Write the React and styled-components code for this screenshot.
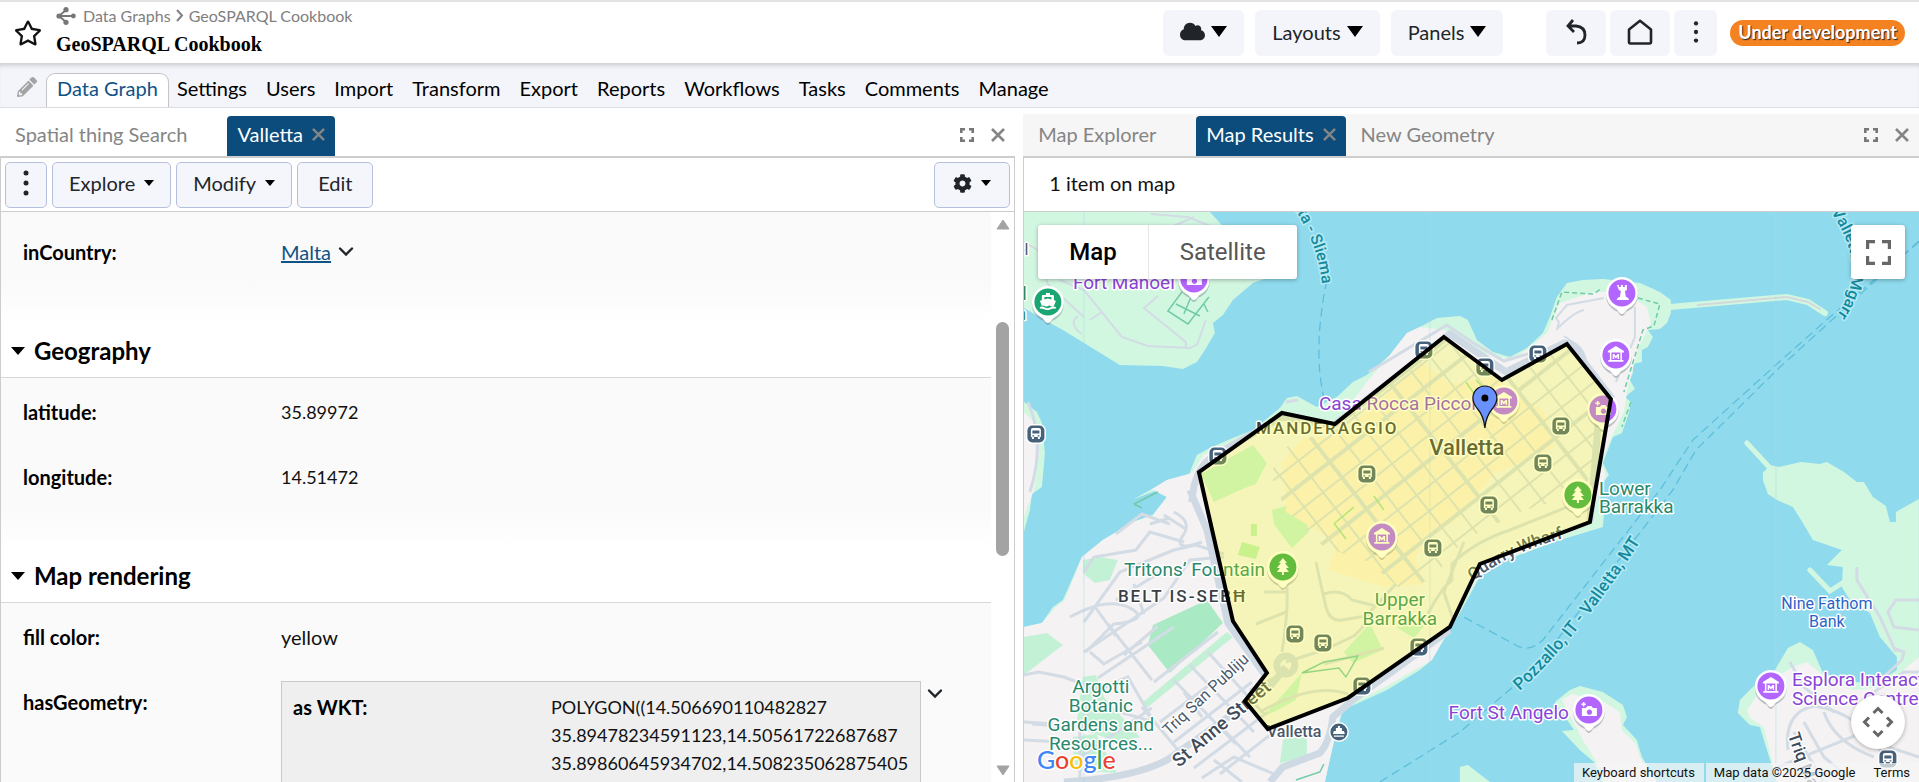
import React from 'react';
import styled, { createGlobalStyle } from 'styled-components';
import { FaCloud, FaCog, FaPencilAlt, FaRegStar } from 'react-icons/fa';

const GlobalStyles = createGlobalStyle`
  * {
    box-sizing: border-box;
  }
  body {
    margin: 0;
    background: #fff;
    color: #111;
    font-family: Lato, 'Open Sans', sans-serif;
    font-size: 20px;
  }
  button {
    font: inherit;
    color: inherit;
    cursor: pointer;
  }
  a {
    text-decoration: none;
  }
`;

const Page = styled.div`
  display: flex;
  flex-direction: column;
  height: 100vh;
  min-height: 480px;
  overflow: hidden;
`;

/* ---------- header ---------- */

const Header = styled.header`
  display: flex;
  align-items: center;
  flex: none;
  height: 64px;
  padding: 0 14px;
  border-top: 2px solid #e3e3e3;
  border-bottom: 1px solid #d5d5d8;
`;

const StarButton = styled.button`
  display: flex;
  padding: 0;
  border: 0;
  background: none;
  color: #111;
`;

const TitleBlock = styled.div`
  display: flex;
  flex-direction: column;
  flex: 1;
  gap: 4px;
  padding: 0 0 6px 14px;
`;

const Breadcrumb = styled.nav`
  display: flex;
  align-items: center;
  gap: 5px;
  font-size: 16px;
  line-height: 24px;
  a {
    color: #808080;
  }
  a:first-of-type {
    margin-left: 2px;
  }
`;

const Title = styled.h1`
  margin: 0;
  font-family: 'Liberation Serif', serif;
  font-size: 20px;
  line-height: 24px;
  color: #000;
`;

const HeaderGroup = styled.div`
  display: flex;
  gap: ${(props) => props.$gap};
  margin-right: ${(props) => props.$after};
`;

const HeaderButton = styled.button`
  display: flex;
  align-items: center;
  justify-content: center;
  gap: 6px;
  height: 46px;
  min-width: ${(props) => props.$min || '0'};
  padding: 0 ${(props) => props.$pad || '0'} 2px;
  border: 0;
  border-radius: 6px;
  background: #f4f5fa;
  color: #212529;
`;

const StatusBadge = styled.span`
  padding: 0 8px 2px;
  border-radius: 13px;
  background: #f58220;
  color: #fff;
  font-size: 18px;
  font-weight: 700;
  line-height: 24px;
  text-shadow: 1px 1px 1px #222;
`;

/* ---------- section navigation ---------- */

const NavBar = styled.nav`
  display: flex;
  align-items: flex-end;
  flex: none;
  height: 44px;
  padding-left: 17px;
  border-bottom: 1px solid #dbdbe2;
  background: #f4f5fa;
  box-shadow: inset 0 4px 5px -3px rgba(0, 0, 0, 0.2);
`;

const PencilIcon = styled(FaPencilAlt)`
  margin: 0 9px 10px 0;
  color: #a3a3a3;
`;

const NavLink = styled.a`
  margin-right: -3px;
  padding: 0 10px 4px;
  border: 1px solid ${(props) => (props.$active ? '#c3c3c8' : 'transparent')};
  border-bottom: 0;
  border-radius: 9px 9px 0 0;
  background: ${(props) => (props.$active ? '#fff' : 'transparent')};
  color: ${(props) => (props.$active ? '#0f5286' : '#000')};
  line-height: 29px;
`;

/* ---------- panels ---------- */

const Workspace = styled.main`
  display: grid;
  grid-template-columns: minmax(0, 17fr) minmax(0, 15fr);
  column-gap: 8px;
  flex: 1;
  min-height: 0;
  padding-top: 6px;
`;

const Panel = styled.section`
  display: flex;
  flex-direction: column;
  min-height: 0;
`;

const TabStrip = styled.div`
  display: flex;
  align-items: flex-end;
  flex: none;
  height: 44px;
  padding-right: 10px;
  border-bottom: 2px solid #cdcdcd;
  background: ${(props) => (props.$muted ? '#f6f6f6' : '#fff')};
`;

const Tab = styled.button`
  display: flex;
  align-items: center;
  gap: 9px;
  height: 40px;
  margin-left: ${(props) => (props.$active ? '25px' : '0')};
  padding: 0 ${(props) => (props.$active ? '10px' : '15px')} 4px;
  border: 0;
  border-radius: 4px 4px 0 0;
  background: ${(props) => (props.$active ? '#0b4c7c' : 'transparent')};
  color: ${(props) => (props.$active ? '#fff' : '#858585')};
`;

const PanelTools = styled.div`
  display: flex;
  align-items: center;
  gap: 17px;
  height: 40px;
  margin-left: auto;
  padding-bottom: 3px;
`;

const ToolButton = styled.button`
  display: flex;
  padding: 0;
  border: 0;
  background: none;
  color: #777;
`;

const PanelBody = styled.div`
  display: flex;
  flex-direction: column;
  flex: 1;
  min-height: 0;
  border-left: 1px solid #cdcdcd;
  border-right: ${(props) => (props.$rightEdge ? '1px solid #cdcdcd' : '0')};
`;

const Toolbar = styled.div`
  display: flex;
  align-items: center;
  gap: 5px;
  flex: none;
  height: 54px;
  padding: 0 4px;
  border-bottom: 1px solid #cdcdcd;
`;

const ToolbarButton = styled.button`
  display: flex;
  align-items: center;
  justify-content: center;
  gap: 9px;
  height: 46px;
  min-width: 42px;
  padding: 0 ${(props) => props.$pad || '0'} 3px;
  border: 1px solid #b5c0dc;
  border-radius: 5px;
  background: #f4f6fb;
  color: #212529;
  &:last-child {
    margin-left: ${(props) => (props.$end ? 'auto' : '0')};
  }
`;

const MapSummary = styled.p`
  flex: none;
  height: 54px;
  margin: 0;
  padding: 0 25px;
  border-bottom: 1px solid #cdcdcd;
  line-height: 50px;
`;

/* ---------- resource form ---------- */

const FormViewport = styled.div`
  display: flex;
  flex: 1;
  min-height: 0;
`;

const FormContent = styled.div`
  flex: 1;
  min-width: 0;
  overflow: hidden;
`;

const SectionHeading = styled.h2`
  display: flex;
  align-items: center;
  gap: 9px;
  height: 58px;
  margin: 0;
  padding: 4px 9px 0 10px;
  border-bottom: 1px solid #d8d8d8;
  font-size: 24px;
  font-weight: 700;
  color: #000;
`;

const SectionBody = styled.dl`
  margin: 0;
  padding: ${(props) => (props.$first ? '8px' : '2px')} 22px 35px;
  background: linear-gradient(to top, #fff, #fafafa 35px);
`;

const PropertyRow = styled.div`
  display: flex;
  min-height: 65px;
  padding-top: 16px;
  line-height: 32px;
  dt {
    flex: none;
    width: 258px;
    font-weight: 700;
    color: #000;
  }
  dd {
    display: flex;
    align-items: center;
    gap: 7px;
    height: 32px;
    margin: 0;
    font-size: ${(props) => (props.$numeric ? '18px' : 'inherit')};
  }
  dd a {
    color: #0f5286;
    text-decoration: underline;
  }
`;

const GeometryCell = styled.div`
  display: flex;
  align-items: flex-start;
  gap: 6px;
  flex: 1;
  min-width: 0;
  margin-right: 26px;
  margin-top: -5px;
  svg {
    margin-top: 7px;
  }
`;

const GeometryBox = styled.dl`
  display: flex;
  flex: 1;
  min-width: 0;
  height: 200px;
  margin: 0;
  padding: 11px 0 0 11px;
  border: 1px solid #c8c8c8;
  background: #efefef;
  line-height: 28px;
  dd {
    display: block;
    height: auto;
    white-space: pre-line;
  }
`;

const ScrollTrack = styled.div`
  display: flex;
  flex-direction: column;
  align-items: center;
  flex: none;
  width: 23px;
  padding: 7px 0 6px;
`;

const ScrollThumb = styled.div`
  width: 13px;
  height: 42%;
  margin: 92px 0 auto;
  border-radius: 7px;
  background: #a3a3a3;
`;

/* ---------- map ---------- */

const MapCanvas = styled.div`
  position: relative;
  flex: 1;
  min-height: 0;
  overflow: hidden;
  background: #90daee;
  font-family: Roboto, sans-serif;
  > svg {
    display: block;
    width: 100%;
    height: 100%;
  }
`;

const MapTypeControl = styled.div`
  position: absolute;
  top: 13px;
  left: 14px;
  display: flex;
  border-radius: 3px;
  background: #fff;
  box-shadow: 0 1px 4px rgba(0, 0, 0, 0.3);
`;

const MapTypeButton = styled.button`
  height: 54px;
  padding: 0 31px;
  border: 0;
  background: none;
  color: ${(props) => (props.$active ? '#000' : '#565656')};
  font-size: 24px;
  font-weight: ${(props) => (props.$active ? 500 : 400)};
  & + & {
    border-left: 1px solid #e6e6e6;
  }
`;

const MapRoundButton = styled.button`
  position: absolute;
  right: 14px;
  ${(props) => (props.$top ? 'top: 13px;' : 'bottom: 33px;')}
  display: flex;
  align-items: center;
  justify-content: center;
  width: 54px;
  height: 54px;
  padding: 0;
  border: 0;
  border-radius: ${(props) => (props.$top ? '3px' : '50%')};
  background: #fff;
  color: #666;
  box-shadow: 0 1px 4px rgba(0, 0, 0, 0.3);
`;

const Attribution = styled.div`
  position: absolute;
  right: 0;
  bottom: 0;
  display: flex;
  gap: 2px;
  font-size: 13px;
  line-height: 19px;
  white-space: nowrap;
`;

const AttributionItem = styled.div`
  display: flex;
  gap: 18px;
  padding: 0 9px 0 8px;
  background: rgba(245, 245, 245, 0.72);
  color: #111;
  a,
  button {
    padding: 0;
    border: 0;
    background: none;
    color: inherit;
  }
`;

/* ---------- icons ---------- */

const Dots = ({ size = 28 }) => (
  <svg width="6" height={size} viewBox="0 0 6 28" fill="#212529">
    <circle cx="3" cy="4" r="2.5" />
    <circle cx="3" cy="14" r="2.5" />
    <circle cx="3" cy="24" r="2.5" />
  </svg>
);

const Triangle = ({ w = 16, h = 11 }) => (
  <svg width={w} height={h} viewBox="0 0 16 11" preserveAspectRatio="none">
    <path d="M0 0h16l-8 11z" fill="#000" />
  </svg>
);

const Chevron = () => (
  <svg width="16" height="12" viewBox="0 0 16 12">
    <path d="M2 2.5l6 6 6-6" fill="none" stroke="#212529" strokeWidth="2.4" strokeLinecap="round" />
  </svg>
);

const Cross = ({ size = 14 }) => (
  <svg width={size} height={size} viewBox="0 0 14 14">
    <path d="M1 1l12 12M13 1L1 13" stroke="#858585" strokeWidth="2.6" />
  </svg>
);

const Expand = () => (
  <svg width="14" height="14" viewBox="0 0 14 14">
    <path
      d="M1.3 5V1.3H5M9 1.3h3.7V5M12.7 9v3.7H9M5 12.7H1.3V9"
      fill="none"
      stroke="#777"
      strokeWidth="2.6"
    />
  </svg>
);

const GraphIcon = () => (
  <svg width="20" height="18" viewBox="0 0 20 18" fill="#777">
    <path d="M3 9h14M3 9L10 3M3 9l7 6" stroke="#777" strokeWidth="1.8" fill="none" />
    <circle cx="3" cy="9" r="2.6" />
    <circle cx="10" cy="2.7" r="2.6" />
    <circle cx="10" cy="15.3" r="2.6" />
    <circle cx="17.4" cy="9" r="2.4" />
  </svg>
);

const UndoIcon = () => (
  <svg width="24" height="26" viewBox="0 0 24 26" fill="none" stroke="#212529" strokeWidth="2.8">
    <path d="M9 1L4 7l6 6M4 7h8q9 1 9 9 0 8-8 8" />
  </svg>
);

const HomeIcon = () => (
  <svg width="26" height="26" viewBox="0 0 26 26" fill="none" stroke="#212529" strokeWidth="2.6">
    <path d="M2 10.5L13 1.8l11 8.7V23q0 1.5-1.5 1.5h-19Q2 24.5 2 23z" strokeLinejoin="round" />
  </svg>
);

/* ---------- map drawing ---------- */

const AREA =
  '420,125 478,168 543,132 587,187 566,310 456,352 426,415 324,486 244,517 221,489 243,461 209,409 175,260 258,201 311,212';

const MAINLAND =
  'M0 415L18 411 29 395 39 388 58 345 79 328 96 318 109 310 129 303 143 285 131 279 110 287 128 277 136 274 143 268 165 263 168 255 173 243 186 236 209 226 229 218 256 196 263 186 273 184 293 195 313 185 329 170 343 163 366 143 383 121 396 115 413 106 436 104 444 108 453 128 469 140 486 145 503 136 519 121 526 105 533 85 543 71 559 68 579 67 616 71 636 80 647 88 647 101 643 111 636 117 624 118 629 125 624 135 618 138 618 150 609 152 609 161 606 168 611 177 601 185 607 190 605 201 598 221 589 225 579 251 585 263 579 271 576 288 580 303 579 315 553 323 536 328 476 350 458 361 436 401 424 421 408 448 396 458 363 478 319 498 311 525 304 555 301 570H0z';

const MAINLAND_INNER =
  'M0 415L18 411 31 396 41 388 58 345 79 328 109 310 129 303 143 285 128 277 143 268 168 261 180 243 229 220 260 205 311 212 343 170 366 143 383 121 396 115 420 118 445 130 460 142 486 147 503 138 523 121 536 91 569 80 600 80 623 95 627 111 615 135 604 175 600 200 589 222 577 250 582 263 573 288 566 312 458 357 424 419 408 448 363 474 319 496 311 525 301 570H0z';

const STREETS = [
  'M0 463L15 460 40 465 74 478M60 440L140 386 166 348 200 345M74 478L104 465 130 510 96 500M60 410L96 360 150 338 172 333 200 342',
  'M60 360L70 345 112 338 126 320 160 330M92 322L118 302 146 312M150 300Q170 310 158 325 150 340 178 330M126 312l20-6M140 303l22 14',
  'M46 405Q84 384 106 396T90 412L62 440M72 396L92 424M92 388L146 354M110 372L120 402',
  'M84 412L128 468M66 440L80 452 118 430M100 443L134 414M74 466L150 415',
  'M130 470L194 420M118 495L160 545M150 468L212 532M166 453L230 520M184 440L240 502M136 510L200 462M150 530L228 470M170 556L244 500M196 562L250 520',
  'M178 566L210 545 250 562M190 548L218 570M160 480L178 505M200 518L226 545M128 496L56 545M50 515L8 512M0 510L30 512M0 528L38 530M56 570L56 520 74 478',
  'M262 362Q266 392 258 440M262 380H240M262 400L232 412',
  'M292 350L302 395Q306 410 318 408L342 404M300 382Q318 376 328 388L352 394',
  'M262 450L300 438 330 424Q344 412 346 400L372 372M440 330L428 360 420 380 430 410M404 402Q416 378 428 368V352Q450 330 486 318L566 286',
  'M236 500Q290 470 324 482M226 478L262 460M360 436Q330 444 300 452',
];

const MAJOR_ROADS = [
  'M40 570Q110 566 143 548L243 478 262 455',
  'M166 278L183 318 204 411 241 463M168 290Q170 250 200 238L258 205 309 214 402 142 426 122 482 160 540 131Q556 132 560 150L587 185 574 215 566 310',
  'M246 570L259 555 296 541Q306 530 309 505L329 488 426 418',
];

const EAST_ROADS = [
  'M764 538Q760 500 790 494 830 500 850 530L895 545M754 555L840 520 858 540M800 500Q810 530 850 545M780 510L800 545 830 570M853 471L878 448 880 440 869 436',
  'M833 355V368L856 405 872 440M895 388H872L864 400 870 415 895 418M766 450L780 475 810 500M895 460L880 460 850 480M770 520L800 570',
];

const GRID = Array.from({ length: 26 }, (_, i) => i);

const GLYPHS = {
  rook: 'M-5-8h2v2h2v-2h2v2h2v-2h2v5l-2 1 1 6h1l2 2v1h-12v-1l2-2h1l1-6-2-1z',
  museum:
    'M0-9L8-4v1.500H-8V-4zM-6-2.500h1.500V5h9v-7.500H6V5h1.500v1.800h-15V5H-6zM-3.200 4v-5h1.500L0 1l1.700-2h1.500v5h-1.500V1.500L0 3.400-1.700 1.500V4z',
  camera:
    'M-5-2h2l1.500-2h4L4-2h4v8H-7v-8zM.5-.5a2.700 2.700 0 1 0 .1 0M-7.500-6.500H-6V-8h1.500v1.500H-3V-5h-1.500v1.500H-6V-5h-1.500z',
  tree: 'M0-9l4 5H2l4 5H3l3 4H1v3h-2V5h-5l3-4h-3l4-5h-2z',
  ferry:
    'M-2-9h4v2h3q1 0 1 1v4l2 1-2 5q-2 1-3 0-1.500-1-3 0-1.500 1-3 0-1.500-1-3 0l-2-5 2-1v-4q0-1 1-1h3zM-3.500-5v2.500L0-3.500l3.500 1V-5zM-8 5q3-1 5 .5t5 0 6-.5v1.500q-4 0-6 1t-5 0-5-1z',
};

const Pin = ({ x, y, glyph, color = '#b266ff' }) => (
  <g transform={`translate(${x} ${y})`}>
    <path
      d="M0 22q-2 0-4-4Q-16 13-16 0A16 16 0 0 1 16 0Q16 13 4 18 2 22 0 22z"
      fill="#52606d"
      opacity=".35"
      transform="translate(0 1)"
    />
    <path d="M0 21q-2 0-5-4.500Q-16 11-16 0A16 16 0 0 1 16 0Q16 11 5 16.500 2 21 0 21z" fill="#fff" />
    <circle r="13.500" fill={color} />
    <path d={GLYPHS[glyph]} fill="#fff" fillRule="evenodd" />
  </g>
);

const BusStop = ({ x, y }) => (
  <g transform={`translate(${x} ${y})`}>
    <rect x="-10" y="-10" width="20" height="20" rx="6.500" fill="#fff" />
    <rect x="-8.500" y="-8.500" width="17" height="17" rx="5" fill="#46617a" />
    <path
      d="M-5 3v-7q0-2 2-2h6q2 0 2 2v7h-1v2h-2v-2h-4v2h-2v-2zM-3.500-3.500v3h7v-3zM-3.500 1.200h1.800v1.200h-1.800zM1.700 1.200h1.800v1.200H1.700z"
      fill="#fff"
      fillRule="evenodd"
    />
  </g>
);

const STOPS = [
  [400, 138], [194, 244], [343, 262], [12, 222], [461, 155], [514, 142], [537, 214], [519, 251],
  [465, 293], [409, 336], [271, 422], [299, 431], [395, 435], [338, 474], [864, 547],
];

const PINS = [
  { x: 598, y: 81, glyph: 'rook' },
  { x: 592, y: 143, glyph: 'museum' },
  { x: 480, y: 189, glyph: 'museum' },
  { x: 579, y: 197, glyph: 'camera' },
  { x: 358, y: 325, glyph: 'museum' },
  { x: 565, y: 498, glyph: 'camera' },
  { x: 747, y: 474, glyph: 'museum' },
  { x: 170, y: 67, glyph: 'camera' },
  { x: 554, y: 283, glyph: 'tree', color: '#34a853' },
  { x: 259, y: 355, glyph: 'tree', color: '#34a853' },
  { x: 24, y: 90, glyph: 'ferry', color: '#1aa673' },
];

const MapLabel = styled.text`
  fill: ${(props) => props.$color};
  font-size: ${(props) => props.$size || 19}px;
  font-weight: ${(props) => props.$weight || 400};
  letter-spacing: ${(props) => (props.$tracked ? '2px' : 'normal')};
  text-anchor: ${(props) => props.$anchor || 'start'};
  stroke: ${(props) => props.$halo || '#fff'};
  stroke-width: 3px;
  stroke-linejoin: round;
  paint-order: stroke;
`;

const LogoText = styled.text`
  font-family: Lato, sans-serif;
  font-size: 25px;
  font-weight: 500;
  stroke: #fff;
  stroke-width: 3px;
  paint-order: stroke;
`;

const PURPLE = '#8a43d6';
const GREEN = '#28896a';
const TEAL = '#14899c';
const SLATE = '#4a586b';

function MapDrawing() {
  return (
    <svg viewBox="0 0 895 570" preserveAspectRatio="xMidYMid slice" role="img" aria-label="Map of Valletta">
      <defs>
        <clipPath id="city">
          <path d="M246 262L262 235 310 216 420 127 478 168 543 134 585 187 572 250 558 282 500 298 440 328 410 365 380 380 345 350 300 335 262 298z" />
        </clipPath>
        <path id="sliema" d="M222 -62Q292 6 298 72" />
        <path id="mgarr" d="M807 0Q850 62 806 112" />
        <path id="pozzallo" d="M496 479Q556 424 620 324" />
        <path id="wharf" d="M449 369Q490 338 544 325" />
        <path id="publiju" d="M145 524L226 448" />
        <path id="anne" d="M155 556L246 479" />
        <path id="triq" d="M764 523Q774 554 796 600" />
      </defs>

      {/* land */}
      <g fill="#d2f7e1">
        <path d="M0 0H186L196 11 243 66 229 71 209 88 199 103 189 111 191 121 181 138 173 150 159 157 139 154 96 153 39 118 26 111 0 96z" />
        <path d="M0 190L13 200 18 211 21 241 18 275 8 282 6 298 0 320z" />
        <path d={MAINLAND} />
        <path d="M739 261L746 253 755 255 777 250 796 252 803 250 820 260 833 270 840 270 849 285 862 294 866 310 872 310 872 300 895 287V570H753L744 541 736 515 726 513 714 501 716 488 729 475 751 458 764 436 776 430 789 438 799 461 829 470 853 471 873 458 873 445 856 425 846 401 826 388 818 375 819 355 803 353 818 338 789 328 779 311 769 295 753 288 744 282 739 268z" />
        <path d="M531 490L546 478 556 474 579 480 599 493 603 505 599 513 613 528 618 545 633 570H579L570 550 556 538 538 519 550 518z" />
        <path d="M436 555L444 553 466 570H436z" />
      </g>
      <g fill="#f4f2f3">
        <path d={MAINLAND_INNER} />
        <path d="M0 200L12 212 15 241 10 278 0 305z" />
        <path d="M723 498Q745 462 783 450L799 463 829 478 860 475 895 445V570H753L740 515 726 506z" />
        <path d="M538 488L548 482 580 490 596 500 598 518 612 532 616 545 633 570H585L560 530 552 515z" />
      </g>
      <g stroke="#d2f7e1" strokeLinecap="round" fill="none">
        <path d="M646 95L763 85 784 90 801 101" strokeWidth="6" />
        <path d="M674 93L763 85 784 90 796 97" stroke="#d3d8dc" strokeWidth="2" />
        <path d="M723 231L748 258M786 358L806 379 820 370" strokeWidth="5" />
      </g>

      {/* parks */}
      <g fill="#c3f1d5">
        <path d="M118 491L203 420 209 425 123 496zM59 348L76 345 94 348 86 368 71 371 59 361zM0 425L23 421 39 433 0 463zM59 465L72 463 80 485 116 525 96 531 52 515zM49 525L72 522 93 561 50 558zM259 528L283 511V545L256 551z" />
        <path d="M177 262L229 233 243 251 232 272 216 278 190 290zM248 298L262 294 276 286 285 320 268 336 250 312zM240 504L278 461 272 488 250 500zM346 411L359 438 329 451 320 440zM372 415L402 412 390 426z" />
      </g>
      <path d="M129 413L183 388 199 411 146 461 124 433z" fill="#a9eac4" />
      <path d="M218 330l18 5-4 12-18-4zM227 312h6v12h-6z" fill="#b8edb9" />

      {/* town centre */}
      <path d="M262 285L258 250 280 225 310 226 400 152 426 172 470 165 520 200 530 235 470 262 430 310 405 320 392 345 400 372 360 375 305 358 312 330 262 300z" fill="#fcedde" />

      {/* streets */}
      <g fill="none" stroke="#d3dbe4" strokeWidth="3">
        {STREETS.map((d) => (
          <path key={d} d={d} />
        ))}
        <g clipPath="url(#city)">
          <g transform="rotate(-38 400 260)">
            {GRID.map((i) => (
              <path key={`a${i}`} d={`M150 ${14 + i * 20}H700`} strokeWidth={i % 3 ? 2 : 4} />
            ))}
            {GRID.map((i) => (
              <path key={`b${i}`} d={`M${140 + i * 24} 50V460`} strokeWidth={i % 4 ? 2 : 4} />
            ))}
          </g>
        </g>
        {EAST_ROADS.map((d) => (
          <path key={d} d={d} />
        ))}
        <path
          d="M0 30L14 38 24 72 60 105M36 68L60 78 98 125 124 134 166 136 173 133 182 108M134 84L120 96 162 130 162 136M66 108L78 100M54 104q-10 8 4 18M127 2L164 5 186 14M127 24L170 5"
          strokeWidth="2"
        />
        <path d="M533 118L535 110 532 106 543 93 580 86M611 95V125L592 170M533 117Q550 100 560 98M540 124L552 132" strokeWidth="2" />
        <path d="M345 160L423 113 448 130 480 149 510 140M262 190L274 188M4 190Q22 230 6 280" strokeWidth="3" />
      </g>
      <g fill="none" stroke="#cfd9e4" strokeWidth="7">
        {MAJOR_ROADS.map((d) => (
          <path key={d} d={d} />
        ))}
      </g>
      <circle cx="262" cy="453" r="9" fill="none" stroke="#cfd9e4" strokeWidth="7" />
      <g fill="none" stroke="#71caa8" strokeWidth="1.500">
        <path d="M158 80L144 99 164 112 185 85M152 92L176 104M170 78L160 102M180 92L184 100" />
        <path d="M528 108L538 80 570 82 578 76M614 86L636 92 630 114 619 118 600 180M607 190L598 215" strokeDasharray="5 3" />
        <path d="M110 292L134 280M118 296L110 292M278 461L300 450 334 444 322 465 315 456zM272 568L296 560 300 552" />
        <path d="M311 311L330 295M350 284L360 298M310 311L322 327M442 170L452 184M452 168L462 178" stroke="#9ade96" />
      </g>

      {/* ferry routes */}
      <g fill="none" stroke="#5dbfda" strokeWidth="1.300" strokeDasharray="9 5">
        <path d="M303 68Q288 140 301 190" />
        <path d="M895 30L806 105 753 152 669 228 636 278 519 428Q504 442 490 432L436 403" />
        <path d="M895 29L753 158 672 238 649 278 530 432" />
        <path d="M356 570L436 520 489 475" />
      </g>
      <path d="M60 0V570M406 0V570M752 0V570" stroke="#a9dfe9" opacity=".5" />

      {/* labels and points of interest */}
      <MapLabel x="-8" y="43" $color={SLATE} $size={16}>el</MapLabel>
      <MapLabel x="-8" y="88" $color={GREEN}>d</MapLabel>
      <MapLabel x="-8" y="108" $color={GREEN}>a</MapLabel>
      <MapLabel x="49" y="77" $color={PURPLE}>Fort Manoel</MapLabel>
      <MapLabel x="295" y="198" $color={PURPLE}>Casa Rocca Piccola</MapLabel>
      <MapLabel x="232" y="222" $color="#3b3f44" $size={17} $weight={500} $tracked>MANDERAGGIO</MapLabel>
      <MapLabel x="443" y="243" $color="#3b3f44" $size={22} $weight={500} $anchor="middle">Valletta</MapLabel>
      <MapLabel x="575" y="283" $color={GREEN}>Lower</MapLabel>
      <MapLabel x="575" y="301" $color={GREEN}>Barrakka</MapLabel>
      <MapLabel x="100" y="364" $color={GREEN}>Tritons’ Fountain</MapLabel>
      <MapLabel x="94" y="390" $color="#3b3f44" $size={17} $weight={500} $tracked>BELT IS-SEBĦ</MapLabel>
      <MapLabel x="376" y="394" $color={GREEN} $anchor="middle">Upper</MapLabel>
      <MapLabel x="376" y="413" $color={GREEN} $anchor="middle">Barrakka</MapLabel>
      {['Argotti', 'Botanic', 'Gardens and', 'Resources...'].map((line, i) => (
        <MapLabel key={line} x="77" y={481 + i * 19} $color={GREEN} $anchor="middle">{line}</MapLabel>
      ))}
      <MapLabel x="243" y="525" $color={SLATE} $size={16} $weight={500}>Valletta</MapLabel>
      <MapLabel x="545" y="507" $color={PURPLE} $anchor="end">Fort St Angelo</MapLabel>
      <MapLabel x="768" y="474" $color={PURPLE}>Esplora Interactive</MapLabel>
      <MapLabel x="768" y="493" $color={PURPLE}>Science Centre</MapLabel>
      <MapLabel x="803" y="397" $color="#2b63c6" $size={16} $anchor="middle">Nine Fathom</MapLabel>
      <MapLabel x="803" y="415" $color="#2b63c6" $size={16} $anchor="middle">Bank</MapLabel>
      <MapLabel $color={TEAL} $halo="#b5ebf7" $size={16} $weight={500} $anchor="end">
        <textPath href="#sliema" startOffset="100%">Valletta - Sliema</textPath>
      </MapLabel>
      <MapLabel $color={TEAL} $halo="#b5ebf7" $size={16} $weight={500}>
        <textPath href="#mgarr">Valletta - Mgarr</textPath>
      </MapLabel>
      <MapLabel $color={TEAL} $halo="#b5ebf7" $size={17} $weight={500}>
        <textPath href="#pozzallo">Pozzallo, IT - Valletta, MT</textPath>
      </MapLabel>
      <MapLabel $color={SLATE} $size={17} $weight={500}>
        <textPath href="#wharf">Quarry Wharf</textPath>
      </MapLabel>
      <MapLabel $color={SLATE} $size={16}>
        <textPath href="#publiju">Triq San Publiju</textPath>
      </MapLabel>
      <MapLabel $color="#3f4b5b" $weight={500}>
        <textPath href="#anne">St Anne Street</textPath>
      </MapLabel>
      <MapLabel $color="#3f4b5b" $size={17} $weight={500}>
        <textPath href="#triq">Triq Marina</textPath>
      </MapLabel>

      {STOPS.map(([x, y]) => (
        <BusStop key={`${x}-${y}`} x={x} y={y} />
      ))}
      <g transform="translate(315 520)">
        <circle r="10" fill="#fff" />
        <circle r="8.500" fill="#46617a" />
        <path d="M-1-6h2v2h2v3h2l1 3h-12l1-3h2v-3h2zM-5 3.500h10v1.300h-10z" fill="#fff" />
      </g>
      {PINS.map((pin) => (
        <Pin key={`${pin.x}-${pin.y}`} {...pin} />
      ))}

      <polygon points={AREA} fill="#ffff00" fillOpacity=".24" stroke="#000" strokeWidth="4" />

      <path
        d="M461 216Q460 204 453 196 449 191 449 186A12 12 0 0 1 473 186Q473 191 469 196 462 204 461 216z"
        fill="#6991fd"
        stroke="#111"
        strokeWidth="1.200"
      />
      <circle cx="461" cy="186" r="3.500" fill="#000" />

      <LogoText x="13" y="557">
        <tspan fill="#4285f4">G</tspan>
        <tspan fill="#ea4335">o</tspan>
        <tspan fill="#fbbc05">o</tspan>
        <tspan fill="#4285f4">g</tspan>
        <tspan fill="#34a853">l</tspan>
        <tspan fill="#ea4335">e</tspan>
      </LogoText>
    </svg>
  );
}

/* ---------- page ---------- */

const NAV_ITEMS = [
  'Data Graph', 'Settings', 'Users', 'Import', 'Transform', 'Export',
  'Reports', 'Workflows', 'Tasks', 'Comments', 'Manage',
];

const WKT = `POLYGON((14.506690110482827
35.89478234591123,14.50561722687687
35.89860645934702,14.508235062875405`;

function PanelTabs({ tabs, active, muted }) {
  return (
    <TabStrip role="tablist" $muted={muted}>
      {tabs.map((tab) => (
        <Tab key={tab} role="tab" aria-selected={tab === active} $active={tab === active}>
          {tab}
          {tab === active && <Cross size={13} />}
        </Tab>
      ))}
      <PanelTools>
        <ToolButton aria-label="Maximise panel"><Expand /></ToolButton>
        <ToolButton aria-label="Close panel"><Cross /></ToolButton>
      </PanelTools>
    </TabStrip>
  );
}

function Property({ name, numeric, children }) {
  return (
    <PropertyRow $numeric={numeric}>
      <dt>{name}:</dt>
      {children}
    </PropertyRow>
  );
}

function ResourceForm() {
  return (
    <FormViewport>
      <FormContent>
        <SectionBody $first>
          <Property name="inCountry">
            <dd><a href="#malta">Malta</a><Chevron /></dd>
          </Property>
        </SectionBody>
        <SectionHeading><Triangle w={14} h={8} />Geography</SectionHeading>
        <SectionBody>
          <Property name="latitude" numeric><dd>35.89972</dd></Property>
          <Property name="longitude" numeric><dd>14.51472</dd></Property>
        </SectionBody>
        <SectionHeading><Triangle w={14} h={8} />Map rendering</SectionHeading>
        <SectionBody>
          <Property name="fill color"><dd>yellow</dd></Property>
          <Property name="hasGeometry" numeric>
            <GeometryCell>
              <GeometryBox>
                <dt>as WKT:</dt>
                <dd>{WKT}</dd>
              </GeometryBox>
              <Chevron />
            </GeometryCell>
          </Property>
        </SectionBody>
      </FormContent>
      <ScrollTrack>
        <svg width="14" height="11" viewBox="0 0 14 11"><path d="M7 1l6 9H1z" fill="#a3a3a3" stroke="#a3a3a3" strokeLinejoin="round" /></svg>
        <ScrollThumb />
        <svg width="14" height="11" viewBox="0 0 14 11"><path d="M1 1h12L7 10z" fill="#a3a3a3" stroke="#a3a3a3" strokeLinejoin="round" /></svg>
      </ScrollTrack>
    </FormViewport>
  );
}

export default function App() {
  return (
    <Page>
      <GlobalStyles />
      <Header>
        <StarButton aria-label="Add to favourites"><FaRegStar size={28} /></StarButton>
        <TitleBlock>
          <Breadcrumb>
            <GraphIcon />
            <a href="#graphs">Data Graphs</a>
            <svg width="8" height="13" viewBox="0 0 8 13"><path d="M1 1l5 5.500-5 5.500" fill="none" stroke="#808080" strokeWidth="2" /></svg>
            <a href="#cookbook">GeoSPARQL Cookbook</a>
          </Breadcrumb>
          <Title>GeoSPARQL Cookbook</Title>
        </TitleBlock>
        <HeaderGroup $gap="11px" $after="43px">
          <HeaderButton $pad="17px" aria-label="Cloud"><FaCloud size={25} /><Triangle /></HeaderButton>
          <HeaderButton $pad="17px">Layouts <Triangle /></HeaderButton>
          <HeaderButton $pad="17px">Panels <Triangle /></HeaderButton>
        </HeaderGroup>
        <HeaderGroup $gap="4px" $after="13px">
          <HeaderButton $min="60px" aria-label="Undo"><UndoIcon /></HeaderButton>
          <HeaderButton $min="60px" aria-label="Home"><HomeIcon /></HeaderButton>
          <HeaderButton $min="43px" aria-label="More"><Dots size={24} /></HeaderButton>
        </HeaderGroup>
        <StatusBadge>Under development</StatusBadge>
      </Header>

      <NavBar>
        <PencilIcon size={20} />
        {NAV_ITEMS.map((item, i) => (
          <NavLink key={item} href="#nav" $active={i === 0}>{item}</NavLink>
        ))}
      </NavBar>

      <Workspace>
        <Panel>
          <PanelTabs tabs={['Spatial thing Search', 'Valletta']} active="Valletta" />
          <PanelBody $rightEdge>
            <Toolbar>
              <ToolbarButton aria-label="Options"><Dots /></ToolbarButton>
              <ToolbarButton $pad="16px">Explore <Triangle w={10} h={6} /></ToolbarButton>
              <ToolbarButton $pad="16px">Modify <Triangle w={10} h={6} /></ToolbarButton>
              <ToolbarButton $pad="20px">Edit</ToolbarButton>
              <ToolbarButton $pad="18px" $end aria-label="Settings">
                <FaCog size={19} /><Triangle w={10} h={6} />
              </ToolbarButton>
            </Toolbar>
            <ResourceForm />
          </PanelBody>
        </Panel>

        <Panel>
          <PanelTabs muted tabs={['Map Explorer', 'Map Results', 'New Geometry']} active="Map Results" />
          <PanelBody>
            <MapSummary>1 item on map</MapSummary>
            <MapCanvas>
              <MapDrawing />
              <MapTypeControl>
                <MapTypeButton $active>Map</MapTypeButton>
                <MapTypeButton>Satellite</MapTypeButton>
              </MapTypeControl>
              <MapRoundButton $top aria-label="Full screen">
                <svg width="25" height="25" viewBox="0 0 25 25" fill="none" stroke="#666" strokeWidth="3.200">
                  <path d="M1.600 9V1.600H9M16 1.600h7.400V9M23.400 16v7.400H16M9 23.400H1.600V16" />
                </svg>
              </MapRoundButton>
              <MapRoundButton aria-label="Map camera controls">
                <svg width="32" height="32" viewBox="0 0 32 32" fill="none" stroke="#666" strokeWidth="3">
                  <path d="M11.500 7L16 2.500 20.500 7M11.500 25l4.500 4.500 4.500-4.500M7 11.500L2.500 16 7 20.500M25 11.500l4.500 4.500-4.500 4.500" />
                </svg>
              </MapRoundButton>
              <Attribution>
                <AttributionItem><button>Keyboard shortcuts</button></AttributionItem>
                <AttributionItem>
                  <span>Map data ©2025 Google</span>
                  <a href="#terms">Terms</a>
                </AttributionItem>
              </Attribution>
            </MapCanvas>
          </PanelBody>
        </Panel>
      </Workspace>
    </Page>
  );
}
